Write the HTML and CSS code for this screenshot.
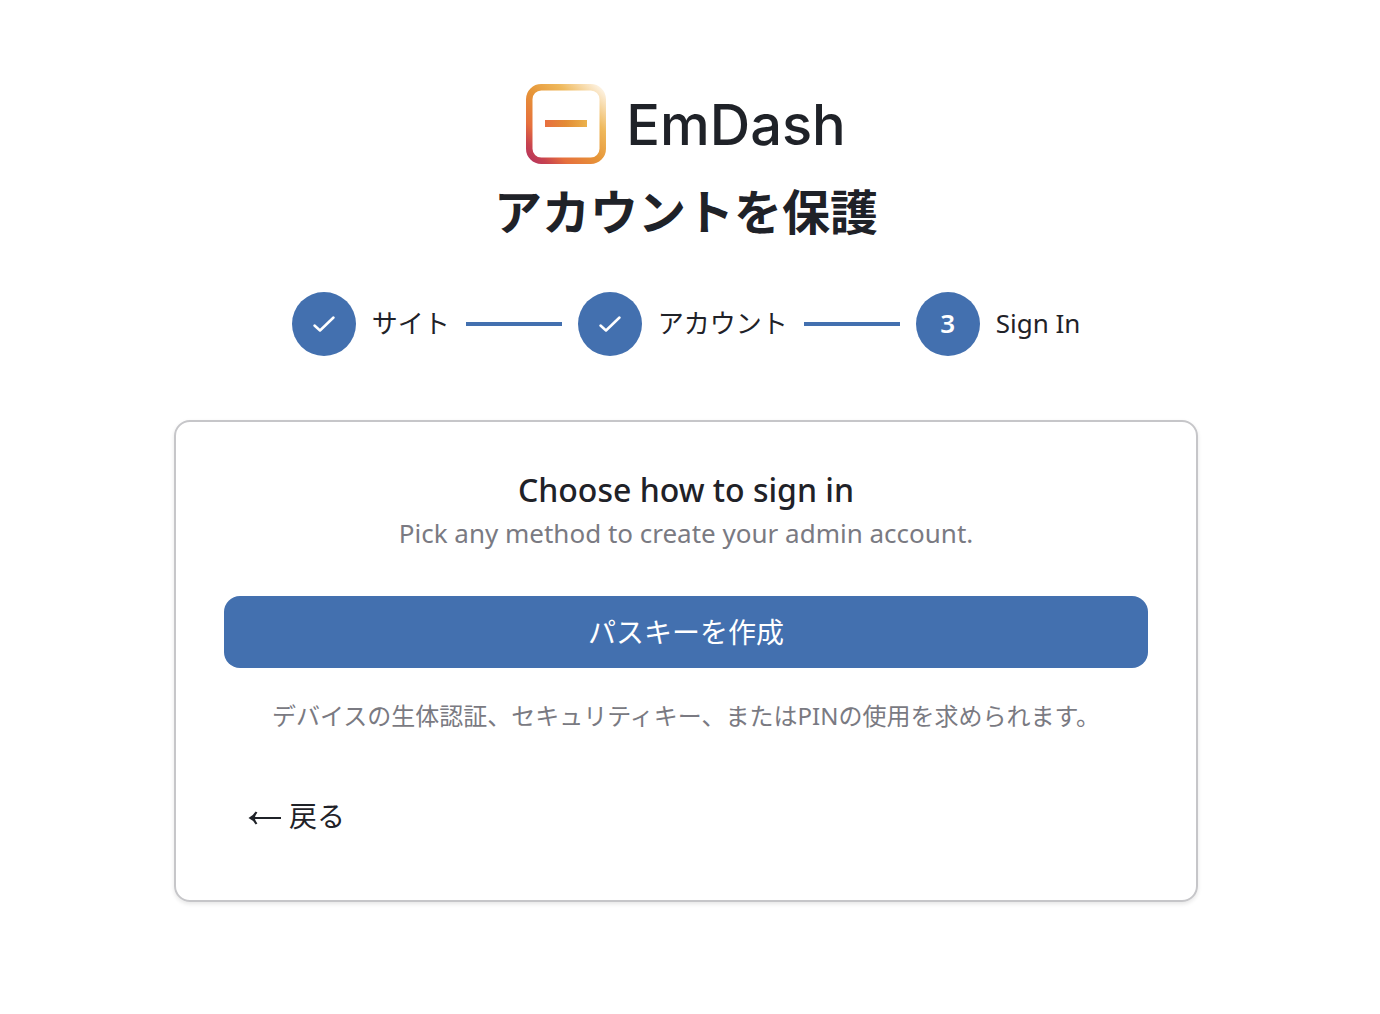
FILE: index.html
```html
<!DOCTYPE html>
<html lang="ja">
<head>
<meta charset="utf-8">
<meta name="viewport" content="width=device-width, initial-scale=1">
<title>EmDash</title>
<link rel="stylesheet" href="styles.css">
</head>
<body>
<main class="setup">
  <header class="header">
    <div class="brand">
      <svg class="brand-mark" viewBox="0 0 80 80" aria-hidden="true">
        <defs>
          <linearGradient id="frame" gradientUnits="userSpaceOnUse" x1="4" y1="76" x2="76" y2="4">
            <stop offset="0" stop-color="#b8365c"/>
            <stop offset="0.1" stop-color="#c8434f"/>
            <stop offset="0.24" stop-color="#e6703d"/>
            <stop offset="0.48" stop-color="#e69537"/>
            <stop offset="0.72" stop-color="#efb95c"/>
            <stop offset="1" stop-color="#fdf3e4"/>
          </linearGradient>
          <linearGradient id="dash" gradientUnits="userSpaceOnUse" x1="19" y1="40" x2="61" y2="40">
            <stop offset="0" stop-color="#e86f40"/>
            <stop offset="0.5" stop-color="#e38c35"/>
            <stop offset="1" stop-color="#ebb24c"/>
          </linearGradient>
        </defs>
        <rect x="3.25" y="3.25" width="73.5" height="73.5" rx="12" fill="none" stroke="url(#frame)" stroke-width="6.5"/>
        <rect x="19" y="36" width="42" height="7" fill="url(#dash)"/>
      </svg>
      <span class="brand-name">EmDash</span>
    </div>
    <h1 class="title">アカウントを保護</h1>
  </header>
  <ol class="steps">
    <li class="step"><span class="dot"><svg class="check" viewBox="0 0 32 32" aria-hidden="true"><path d="M6.5 17.5l5.5 5L25.5 9.5"/></svg></span><span class="step-name">サイト</span></li>
    <li class="step"><span class="dot"><svg class="check" viewBox="0 0 32 32" aria-hidden="true"><path d="M6.5 17.5l5.5 5L25.5 9.5"/></svg></span><span class="step-name">アカウント</span></li>
    <li class="step"><span class="dot">3</span><span class="step-name">Sign In</span></li>
  </ol>
  <section class="card">
    <h2 class="card-title">Choose how to sign in</h2>
    <p class="card-text">Pick any method to create your admin account.</p>
    <button class="primary" type="button">パスキーを作成</button>
    <p class="hint">デバイスの生体認証、セキュリティキー、またはPINの使用を求められます。</p>
    <button class="back" type="button"><svg class="arrow" viewBox="0 0 34 16" aria-hidden="true"><path class="arrow-line" d="M4 8H33"/><path d="M.5 8Q5 6 7.6 1.6l1.8 1Q7.4 5 6.6 8q.8 3 2.8 5.4l-1.8 1Q5 10 .5 8z"/></svg>戻る</button>
  </section>
</main>
</body>
</html>
```
FILE: styles.css
```css
* { box-sizing: border-box; }
body {
  margin: 0;
  padding-right: 8px;
  background: #fff;
  color: #1f2228;
  font-family: "Noto Sans", "Noto Sans CJK JP", sans-serif;
  font-size: 26px;
}
h1, h2, p, ol { margin: 0; padding: 0; }
button { font: inherit; border: 0; cursor: pointer; }
.setup {
  max-width: 1024px;
  margin: 0 auto;
  padding: 84px 0 112px;
}
.header { display: flex; flex-direction: column; align-items: center; }
.brand { display: flex; align-items: center; gap: 20px; }
.brand-mark { width: 80px; height: 80px; }
.brand-name { padding-top: 2px; font-family: Inter, sans-serif; font-size: 56px; font-weight: 500; line-height: 78px; }
.title { margin-top: 16px; font-size: 48px; font-weight: 700; line-height: 64px; }
.steps { display: flex; justify-content: center; margin-top: 48px; list-style: none; }
.step { display: flex; align-items: center; gap: 16px; }
.step + .step::before { content: ""; width: 96px; height: 4px; margin-left: 16px; background: #4370af; }
.step-name, .dot { line-height: 36px; padding-bottom: 2px; }
.dot {
  display: grid;
  place-items: center;
  width: 64px;
  height: 64px;
  border-radius: 50%;
  background: #4370af;
  color: #fff;
  font-weight: 600;
}
.dot:has(.check) { padding: 0; }
.check { width: 32px; height: 32px; fill: none; stroke: #fff; stroke-width: 2.5; stroke-linecap: round; stroke-linejoin: round; }
.card {
  display: flex;
  flex-direction: column;
  margin-top: 64px;
  padding: 48px;
  border: 2px solid #c6c6c9;
  border-radius: 16px;
  box-shadow: 0 2px 4px rgba(0, 0, 0, 0.1);
  text-align: center;
}
.card-title { font-size: 32px; font-weight: 500; line-height: 40px; }
.card-text { margin-top: 4px; color: #7a7a82; line-height: 38px; }
.primary { height: 72px; margin-top: 44px; padding: 0 0 2px; border-radius: 16px; background: #4370af; color: #fff; font-size: 28px; }
.hint { margin-top: 32px; color: #7a7a82; font-size: 24px; line-height: 32px; }
.back { display: flex; align-items: center; gap: 7px; align-self: flex-start; height: 72px; margin-top: 48px; padding: 0 24px 2px; background: none; color: inherit; font-size: 28px; }
.arrow { width: 34px; height: 16px; margin-top: 6px; fill: currentColor; }
.arrow-line { fill: none; stroke: currentColor; stroke-width: 2; }
```
